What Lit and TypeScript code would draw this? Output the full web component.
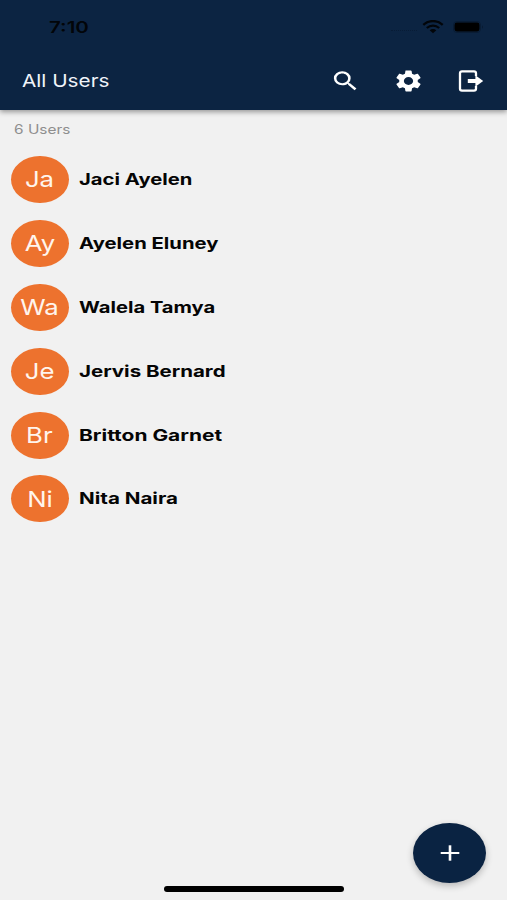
import { LitElement, html, css } from "lit";
import { customElement, property } from "lit/decorators.js";
import { styleMap } from "lit/directives/style-map.js";

interface User {
  name: string;
  stretch: number;
}

const USERS: User[] = [
  { name: "Jaci Ayelen", stretch: 1.263 },
  { name: "Ayelen Eluney", stretch: 1.265 },
  { name: "Walela Tamya", stretch: 1.26 },
  { name: "Jervis Bernard", stretch: 1.28 },
  { name: "Britton Garnet", stretch: 1.308 },
  { name: "Nita Naira", stretch: 1.286 },
];

@customElement("status-bar")
class StatusBar extends LitElement {
  static styles = css`
    :host {
      display: flex;
      justify-content: space-between;
      align-items: center;
      height: 54px;
      padding: 0 23px 0 49px;
      box-sizing: border-box;
      color: #020509;
    }
    .time {
      font-size: 16px;
      font-weight: 600;
      line-height: 20px;
      transform: scaleX(1.28);
      transform-origin: left center;
    }
    .indicators {
      display: flex;
      align-items: center;
    }
    .signal {
      width: 26px;
      border-top: 1px dotted #081c36;
      margin: 7px 5px 0 0;
    }
    svg {
      display: block;
    }
    .wifi {
      margin-right: 9px;
    }
  `;

  render() {
    return html`
      <span class="time">7:10</span>
      <div class="indicators">
        <span class="signal"></span>
        <svg class="wifi" width="22" height="14" viewBox="0 0 22 14" fill="none" stroke="currentColor">
          <path d="M1.3 4.8C6.8-.2 15.2-.2 20.7 4.8" stroke-width="2.3" />
          <path d="M4.8 8C8.4 4.8 13.6 4.8 17.2 8" stroke-width="2.2" />
          <path d="M7.7 10.2C9.6 8.6 12.4 8.6 14.3 10.2L11 13.2Z" fill="currentColor" stroke="none" />
        </svg>
        <svg width="31" height="12" viewBox="0 0 31 12">
          <rect x=".5" y=".5" width="27" height="11" rx="3.4" fill="none" stroke="#091c34" />
          <rect x="1.5" y="1.5" width="25" height="9" rx="2.4" fill="#000" />
          <path d="M29 4.2q1.6 1.8 0 3.6z" fill="#071629" />
        </svg>
      </div>
    `;
  }
}

@customElement("app-toolbar")
class AppToolbar extends LitElement {
  static styles = css`
    :host {
      display: flex;
      justify-content: space-between;
      align-items: center;
      height: 54px;
      padding: 0 23.5px 0 22px;
      box-sizing: border-box;
      color: #fff;
    }
    .title {
      font-size: 17.5px;
      line-height: 24px;
      color: #f0f4fa;
      transform: scaleX(1.185);
      transform-origin: left center;
    }
    .actions {
      display: flex;
      align-items: center;
      gap: 32px;
    }
    svg {
      display: block;
      fill: currentColor;
    }
    .exit {
      margin-left: 1.5px;
    }
  `;

  render() {
    return html`
      <span class="title">All Users</span>
      <div class="actions">
        <svg width="31" height="26" viewBox="0 0 24 24" preserveAspectRatio="none">
          <path d="M15.5 14h-.79l-.28-.27A6.47 6.47 0 0 0 16 9.5 6.5 6.5 0 1 0 9.5 16c1.61 0 3.09-.59 4.23-1.57l.27.28v.79l5 4.99L20.49 19l-4.99-5zm-6 0C7.01 14 5 11.99 5 9.5S7.01 5 9.5 5 14 7.01 14 9.5 11.99 14 9.5 14z" />
        </svg>
        <svg width="31" height="26" viewBox="0 0 24 24" preserveAspectRatio="none">
          <path d="M19.14 12.94c.04-.3.06-.61.06-.94 0-.32-.02-.64-.07-.94l2.03-1.58a.49.49 0 0 0 .12-.61l-1.92-3.32a.488.488 0 0 0-.59-.22l-2.39.96c-.5-.38-1.03-.7-1.62-.94l-.36-2.54a.484.484 0 0 0-.48-.41h-3.84c-.24 0-.43.17-.47.41l-.36 2.54c-.59.24-1.13.57-1.62.94l-2.39-.96c-.22-.08-.47 0-.59.22L2.74 8.87c-.12.21-.08.47.12.61l2.03 1.58c-.05.3-.09.63-.09.94s.02.64.07.94l-2.03 1.58a.49.49 0 0 0-.12.61l1.92 3.32c.12.22.37.29.59.22l2.39-.96c.5.38 1.03.7 1.62.94l.36 2.54c.05.24.24.41.48.41h3.84c.24 0 .44-.17.47-.41l.36-2.54c.59-.24 1.13-.56 1.62-.94l2.39.96c.22.08.47 0 .59-.22l1.92-3.32c.12-.22.07-.47-.12-.61l-2.01-1.58zM12 15.6c-1.98 0-3.6-1.62-3.6-3.6s1.62-3.6 3.6-3.6 3.6 1.62 3.6 3.6-1.62 3.6-3.6 3.6z" />
        </svg>
        <svg class="exit" width="26" height="22" viewBox="0 0 26 22">
          <path d="M18 6V3.2Q18 1.3 16 1.3H4Q2 1.3 2 3.2V18.8Q2 20.7 4 20.7H16Q18 20.7 18 18.8V16" fill="none" stroke="currentColor" stroke-width="2.3" />
          <path d="M9.8 9H17.4V5.2L25.2 11l-7.8 5.8V13H9.8z" />
        </svg>
      </div>
    `;
  }
}

@customElement("user-row")
class UserRow extends LitElement {
  @property() name = "";
  @property({ type: Number }) stretch = 1.25;

  static styles = css`
    :host {
      display: flex;
      align-items: center;
      gap: 10.5px;
      height: 63.9px;
      padding-left: 11px;
    }
    .avatar {
      display: flex;
      align-items: center;
      justify-content: center;
      width: 57.5px;
      height: 47px;
      border-radius: 50%;
      background: #ed722e;
      color: #fff5ed;
    }
    .initials {
      font-size: 22px;
      line-height: 28px;
      transform: scaleX(1.17);
    }
    .name {
      font-size: 16px;
      font-weight: 700;
      line-height: 20px;
      margin-top: -1px;
      color: #050505;
      white-space: nowrap;
      transform-origin: left center;
    }
  `;

  render() {
    return html`
      <div class="avatar"><span class="initials">${this.name.slice(0, 2)}</span></div>
      <span class="name" style=${styleMap({ transform: `scaleX(${this.stretch})` })}>${this.name}</span>
    `;
  }
}

@customElement("app-root")
class AppRoot extends LitElement {
  static styles = css`
    :host {
      display: flex;
      flex-direction: column;
      position: relative;
      width: 100%;
      height: 100vh;
      overflow: hidden;
      background: #f1f1f1;
      font-family: Inter, "Liberation Sans", sans-serif;
    }
    header {
      height: 110px;
      background: #0c2442;
      box-shadow: 0 2px 5px rgba(0, 0, 0, 0.38);
    }
    .count {
      width: max-content;
      margin: 12px 0 0 14px;
      font-size: 12.5px;
      line-height: 16px;
      color: #8e8e8e;
      transform: scaleX(1.23);
      transform-origin: left center;
    }
    .list {
      flex: 1;
      margin-top: 9.5px;
    }
    .add {
      position: absolute;
      right: 20.6px;
      bottom: 17px;
      display: flex;
      align-items: center;
      justify-content: center;
      width: 73px;
      height: 60px;
      padding: 0;
      border: 0;
      border-radius: 50%;
      background: #0a2342;
      box-shadow: 0 3px 7px rgba(0, 0, 0, 0.24);
    }
    .home {
      position: absolute;
      left: 164px;
      bottom: 8.5px;
      width: 180px;
      height: 5.5px;
      border-radius: 3px;
      background: #000;
    }
  `;

  render() {
    return html`
      <header>
        <status-bar></status-bar>
        <app-toolbar></app-toolbar>
      </header>
      <div class="count">${USERS.length} Users</div>
      <div class="list">
        ${USERS.map(
          (user) => html`<user-row .name=${user.name} .stretch=${user.stretch}></user-row>`
        )}
      </div>
      <button class="add" aria-label="Add user">
        <svg width="20" height="16" viewBox="0 0 20 16" stroke="#fff">
          <path d="M.7 8H19.3" stroke-width="2" />
          <path d="M10 .3V15.7" stroke-width="2.6" />
        </svg>
      </button>
      <div class="home"></div>
    `;
  }
}
